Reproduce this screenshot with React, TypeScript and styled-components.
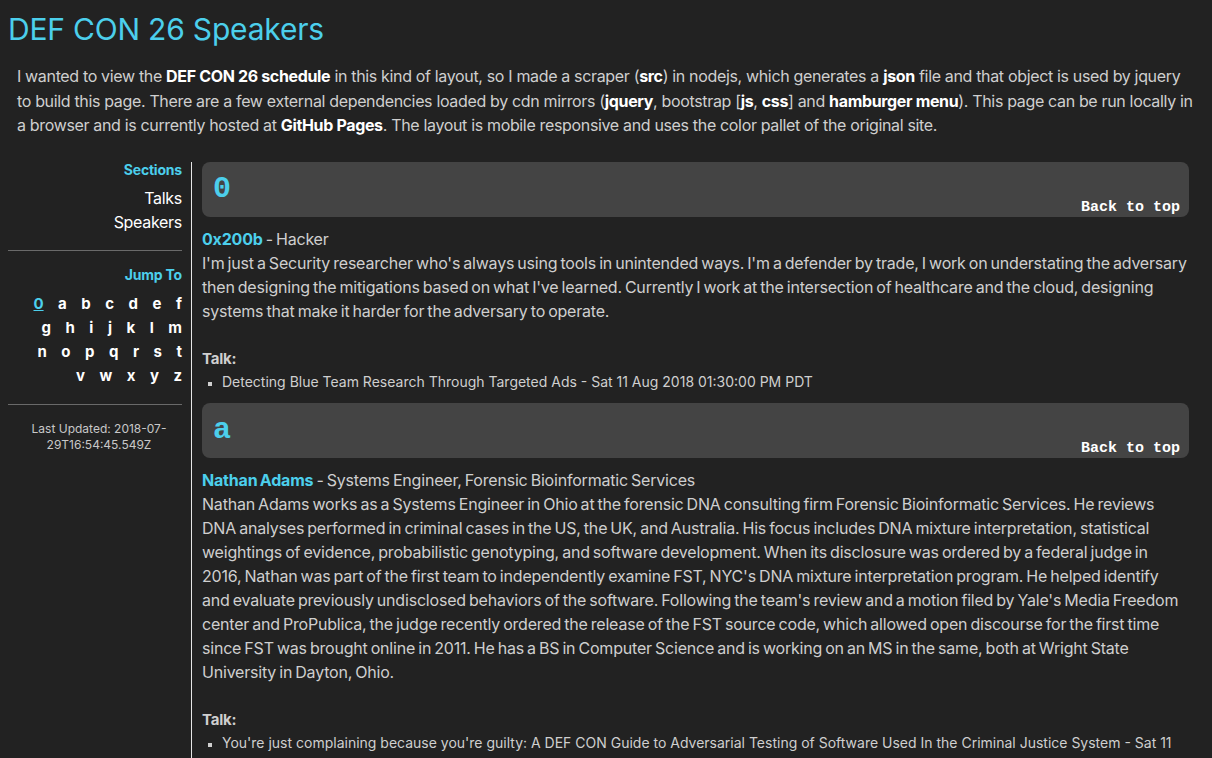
import React from "react";
import styled, { createGlobalStyle } from "styled-components";

const CYAN = "#4ccfec";
const TEXT = "#cfcfcf";

const Global = createGlobalStyle`
  html, body { background: #222222; }
  body {
    margin: 8px;
    color: ${TEXT};
    font-family: Inter, "Noto Sans", "Liberation Sans", sans-serif;
    font-size: 16px;
    line-height: 24px;
  }
  a { text-decoration: none; }
`;

const Title = styled.h1`
  margin: 0;
  padding-top: 2px;
  color: ${CYAN};
  font-size: 30px;
  line-height: 38px;
  font-weight: 400;
  letter-spacing: -0.2px;
`;

const Intro = styled.p`
  margin: 16px 0 0;
  padding: 0 10px 0 9px;
  font-size: 16px;
  line-height: 24.5px;
  letter-spacing: -0.34px;
`;

const Strong = styled.a`
  color: #ffffff;
  font-weight: 700;
`;

const Layout = styled.div`
  display: grid;
  grid-template-columns: 184px 1fr;
  margin-top: 24px;
`;

const Sidebar = styled.aside`
  border-right: 1px solid #e6e6e6;
  padding: 0 9px 0 0;
  text-align: right;
`;

const SideHead = styled.div<{ $top?: number }>`
  color: ${CYAN};
  font-weight: 700;
  font-size: 14px;
  line-height: 20px;
  margin-top: ${(p) => p.$top ?? 0}px;
  letter-spacing: -0.2px;
`;

const SideLinks = styled.div`
  margin-top: 6px;
`;

const SideLink = styled.a`
  display: block;
  color: #ffffff;
  font-size: 16px;
  line-height: 24px;
  letter-spacing: -0.3px;
`;

const Rule = styled.hr<{ $top: number }>`
  border: 0;
  border-top: 1px solid #6a6a6a;
  margin: 0;
  margin-top: ${(p) => p.$top}px;
`;

const Letters = styled.div`
  display: flex;
  flex-wrap: wrap;
  justify-content: flex-end;
  column-gap: 14.5px;
  margin-top: 7px;
  padding-left: 20px;
`;

const Letter = styled.a<{ $active?: boolean }>`
  font-weight: 700;
  font-size: 15px;
  line-height: 24px;
  color: ${(p) => (p.$active ? CYAN : "#ffffff")};
  text-decoration: ${(p) => (p.$active ? "underline" : "none")};
`;

const Updated = styled.div`
  text-align: center;
  font-size: 12px;
  line-height: 16px;
  color: #c8c8c8;
  padding: 16px 10px 0 18px;
`;

const Main = styled.main`
  padding: 0 15px 0 10px;
`;

const LetterHeader = styled.div<{ $top: number }>`
  background: #444444;
  border-radius: 8px;
  height: 55px;
  display: flex;
  justify-content: space-between;
  padding: 0 9px 0 11px;
  margin-top: ${(p) => p.$top}px;
`;

const BigLetter = styled.span`
  color: ${CYAN};
  font-family: "Liberation Mono", "Courier New", monospace;
  font-weight: 700;
  font-size: 30px;
  line-height: 55px;
`;

const BackTop = styled.a`
  align-self: flex-end;
  color: #ffffff;
  font-family: "Liberation Mono", "Courier New", monospace;
  font-weight: 700;
  font-size: 15px;
  line-height: 17px;
  padding-bottom: 1px;
`;

const Speaker = styled.div`
  margin-top: 10px;
  font-size: 16px;
  line-height: 24px;
  letter-spacing: -0.2px;
  word-spacing: -1.2px;
`;

const Name = styled.a`
  color: ${CYAN};
  font-weight: 700;
`;

const TalkHead = styled.div`
  margin-top: 24px;
  font-weight: 700;
  font-size: 15px;
  line-height: 24px;
  letter-spacing: -0.2px;
  word-spacing: 0;
`;

const TalkList = styled.ul`
  margin: 0;
  padding-left: 20px;
  list-style: square;
  font-size: 14px;
  line-height: 21px;
  letter-spacing: 0;
  word-spacing: 0;
  li::marker { font-size: 11px; }
`;

const letters = ["0","a","b","c","d","e","f","g","h","i","j","k","l","m","n","o","p","q","r","s","t","v","w","x","y","z"];

export default function App() {
  return (
    <>
      <Global />
      <Title>DEF CON 26 Speakers</Title>
      <Intro>
        I wanted to view the <Strong>DEF CON 26 schedule</Strong> in this kind of layout, so I made a scraper (<Strong>src</Strong>) in nodejs, which generates a <Strong>json</Strong> file and that object is used by jquery to build this page. There are a few external dependencies loaded by cdn mirrors (<Strong>jquery</Strong>, bootstrap [<Strong>js</Strong>, <Strong>css</Strong>] and <Strong>hamburger menu</Strong>). This page can be run locally in a browser and is currently hosted at <Strong>GitHub Pages</Strong>. The layout is mobile responsive and uses the color pallet of the original site.
      </Intro>
      <Layout>
        <Sidebar>
          <SideHead $top={-2}>Sections</SideHead>
          <SideLinks>
            <SideLink>Talks</SideLink>
            <SideLink>Speakers</SideLink>
          </SideLinks>
          <Rule $top={16} />
          <SideHead $top={14}>Jump To</SideHead>
          <Letters>
            {letters.map((l, i) => (
              <Letter key={l} $active={i === 0}>{l}</Letter>
            ))}
          </Letters>
          <Rule $top={16} />
          <Updated>Last Updated: 2018-07-29T16:54:45.549Z</Updated>
        </Sidebar>
        <Main>
          <LetterHeader $top={0}>
            <BigLetter>0</BigLetter>
            <BackTop>Back to top</BackTop>
          </LetterHeader>
          <Speaker>
            <div><Name>0x200b</Name> - Hacker</div>
            <div>I'm just a Security researcher who's always using tools in unintended ways. I'm a defender by trade, I work on understating the adversary then designing the mitigations based on what I've learned. Currently I work at the intersection of healthcare and the cloud, designing systems that make it harder for the adversary to operate.</div>
            <TalkHead>Talk:</TalkHead>
            <TalkList>
              <li>Detecting Blue Team Research Through Targeted Ads - Sat 11 Aug 2018 01:30:00 PM PDT</li>
            </TalkList>
          </Speaker>
          <LetterHeader $top={11}>
            <BigLetter>a</BigLetter>
            <BackTop>Back to top</BackTop>
          </LetterHeader>
          <Speaker>
            <div><Name>Nathan Adams</Name> - Systems Engineer, Forensic Bioinformatic Services</div>
            <div>Nathan Adams works as a Systems Engineer in Ohio at the forensic DNA consulting firm Forensic Bioinformatic Services. He reviews DNA analyses performed in criminal cases in the US, the UK, and Australia. His focus includes DNA mixture interpretation, statistical weightings of evidence, probabilistic genotyping, and software development. When its disclosure was ordered by a federal judge in 2016, Nathan was part of the first team to independently examine FST, NYC's DNA mixture interpretation program. He helped identify and evaluate previously undisclosed behaviors of the software. Following the team's review and a motion filed by Yale's Media Freedom center and ProPublica, the judge recently ordered the release of the FST source code, which allowed open discourse for the first time since FST was brought online in 2011. He has a BS in Computer Science and is working on an MS in the same, both at Wright State University in Dayton, Ohio.</div>
            <TalkHead>Talk:</TalkHead>
            <TalkList>
              <li>You're just complaining because you're guilty: A DEF CON Guide to Adversarial Testing of Software Used In the Criminal Justice System - Sat 11 Aug 2018 12:00:00 PM PDT</li>
            </TalkList>
          </Speaker>
        </Main>
      </Layout>
    </>
  );
}
